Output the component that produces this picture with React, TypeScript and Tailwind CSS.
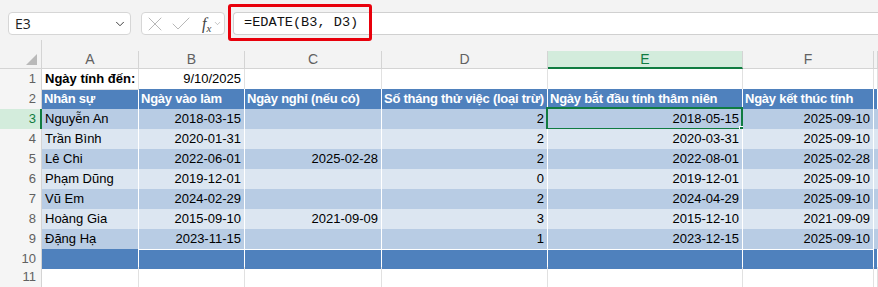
import { X, Check, ChevronDown } from "lucide-react"

const rows = [
  ["Nguyễn An", "2018-03-15", "", "2", "2018-05-15", "2025-09-10"],
  ["Trần Bình", "2020-01-31", "", "2", "2020-03-31", "2025-09-10"],
  ["Lê Chi", "2022-06-01", "2025-02-28", "2", "2022-08-01", "2025-02-28"],
  ["Phạm Dũng", "2019-12-01", "", "0", "2019-12-01", "2025-09-10"],
  ["Vũ Em", "2024-02-29", "", "2", "2024-04-29", "2025-09-10"],
  ["Hoàng Gia", "2015-09-10", "2021-09-09", "3", "2015-12-10", "2021-09-09"],
  ["Đặng Hạ", "2023-11-15", "", "1", "2023-12-15", "2025-09-10"],
]

const headers = [
  "Nhân sự",
  "Ngày vào làm",
  "Ngày nghỉ (nếu có)",
  "Số tháng thử việc (loại trừ)",
  "Ngày bắt đầu tính thâm niên",
  "Ngày kết thúc tính",
  "",
]

const cols = "grid grid-cols-[42px_97px_106px_137px_166px_195px_131px_1fr]"

function RowHead({ n, active }: { n: number; active?: boolean }) {
  return active ? (
    <div className="flex items-center justify-end pr-[4px] bg-[#d3ecdc] border-r-2 border-r-[#107c41] border-b border-b-[#d4d4d4] text-[#107c41]">
      {n}
    </div>
  ) : (
    <div className="flex items-center justify-end pr-[5px] bg-[#f5f5f5] border-r border-b border-[#d4d4d4] text-[#616161]">
      {n}
    </div>
  )
}

export default function App() {
  return (
    <div className="w-[878px] h-[287px] overflow-hidden bg-white font-['Liberation_Sans',Arial,sans-serif] text-[13px] text-black relative">
      {/* Formula bar */}
      <div className="h-[40px] bg-[#f3f3f3] flex items-start pt-[12px]">
        <div className="ml-[8px] w-[123px] h-[23px] bg-white border border-[#d6d6d6] rounded-[4px] flex items-center justify-between pl-[6px] pr-[3px] text-[14px] font-['Open_Sans',sans-serif] text-[#222]">
          <span>E3</span>
          <ChevronDown size={14} strokeWidth={1.6} className="text-[#333]" />
        </div>
        <div className="ml-[10px] w-[84px] h-[23px] bg-white border border-[#d6d6d6] rounded-[4px] flex items-center pl-[1px] gap-[2px]">
          <X size={24} strokeWidth={1} className="text-[#b8b8b8]" />
          <Check size={24} strokeWidth={1} className="text-[#b8b8b8]" />
          <span className="ml-[7px] flex items-center gap-[2px]">
            <span className="italic font-['Liberation_Serif',serif] text-[16px] text-[#444] leading-none">
              f<span className="text-[11px] relative top-[3px]">x</span>
            </span>
            <ChevronDown size={9} strokeWidth={1.5} className="text-[#9a9a9a]" />
          </span>
        </div>
        <div className="ml-[8px] flex-1 h-[23px] bg-white border border-r-0 border-[#d0d0d0] rounded-l-[4px] flex items-center pl-[10px] font-['Liberation_Mono',monospace] text-[13.6px] text-[#111]">
          =EDATE(B3, D3)
        </div>
      </div>

      {/* Red highlight around the formula */}
      <div className="absolute left-[228px] top-[4px] w-[144px] h-[37px] border-[3.5px] border-[#e8000b] rounded-[3px]" />

      {/* Column headers */}
      <div className={`${cols} h-[29px] bg-[#f3f3f3] text-[14px] text-[#616161]`}>
        <div className="border-r border-b border-[#d4d4d4] relative">
          <div className="absolute right-[4px] bottom-[3px] w-0 h-0 border-l-[11px] border-l-transparent border-b-[11px] border-b-[#b9b9b9]" />
        </div>
        {["A", "B", "C", "D", "E", "F", "G"].map((c) => (
          <div key={c} className="flex flex-col justify-end">
            {c === "E" ? (
              <div className="h-[18px] bg-[#d3ecdc] border-r border-r-[#d4d4d4] border-b-2 border-b-[#107c41] flex items-center justify-center text-[#107c41]">
                {c}
              </div>
            ) : (
              <div className="h-[18px] border-r border-b border-[#d4d4d4] flex items-center justify-center">
                {c === "G" ? "" : c}
              </div>
            )}
          </div>
        ))}
      </div>

      {/* Row 1 */}
      <div className={`${cols} h-[20px]`}>
        <RowHead n={1} />
        <div className="border-r border-b border-[#e1e1e1] flex items-center pl-[3px] font-bold whitespace-nowrap overflow-visible z-10">
          Ngày tính đến:
        </div>
        <div className="border-r border-b border-[#e1e1e1] flex items-center justify-end pr-[3px]">9/10/2025</div>
        <div className="border-r border-b border-[#e1e1e1]" />
        <div className="border-r border-b border-[#e1e1e1]" />
        <div className="border-r border-b border-[#e1e1e1]" />
        <div className="border-r border-b border-[#e1e1e1]" />
        <div className="border-r border-b border-[#e1e1e1]" />
      </div>

      {/* Row 2 - table header */}
      <div className={`${cols} h-[20px]`}>
        <RowHead n={2} />
        {headers.map((h, i) => (
          <div
            key={i}
            className="bg-[#4f81bd] border-r border-b border-white flex items-center pl-[2px] font-bold text-white tracking-[-0.25px] whitespace-nowrap overflow-hidden"
          >
            {h}
          </div>
        ))}
      </div>

      {/* Data rows */}
      {rows.map((r, i) => {
        const bg = i % 2 === 0 ? "bg-[#b8cce4]" : "bg-[#dce6f1]"
        return (
          <div key={i} className={`${cols} h-[20px]`}>
            <RowHead n={i + 3} active={i === 0} />
            <div className={`${bg} border-r border-b border-white flex items-center pl-[3px] whitespace-nowrap`}>{r[0]}</div>
            {r.slice(1).map((v, j) => (
              <div
                key={j}
                className={`${bg} border-r border-b border-white flex items-center justify-end pr-[3px] relative`}
              >
                {v}
                {i === 0 && j === 3 && (
                  <div className="absolute left-[-2px] top-[-2px] right-[-1px] bottom-[-1px] border-2 border-[#107c41]">
                    <div className="absolute right-[-5px] bottom-[-5px] w-[7px] h-[7px] bg-[#107c41] border border-white" />
                  </div>
                )}
              </div>
            ))}
            <div className={`${bg} border-b border-white`} />
          </div>
        )
      })}

      {/* Row 10 - total row */}
      <div className={`${cols} h-[18px]`}>
        <RowHead n={10} />
        {[0, 1, 2, 3, 4, 5, 6].map((k) => (
          <div key={k} className="bg-[#4f81bd] border-r border-b border-white" />
        ))}
      </div>

      {/* Row 11 */}
      <div className={`${cols} h-[20px]`}>
        <RowHead n={11} />
        {[0, 1, 2, 3, 4, 5, 6].map((k) => (
          <div key={k} className="border-r border-b border-[#e1e1e1]" />
        ))}
      </div>
    </div>
  )
}
